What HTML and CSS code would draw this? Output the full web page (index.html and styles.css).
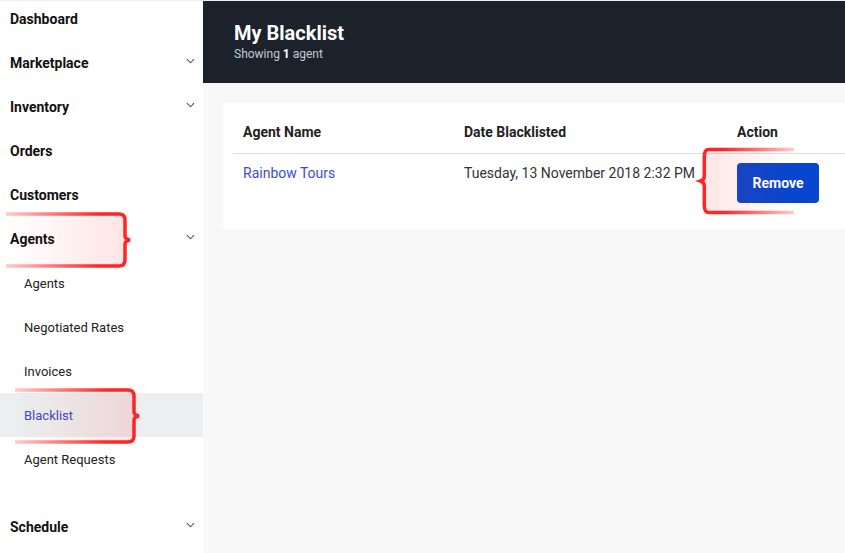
FILE: index.html
```html
<!DOCTYPE html>
<html>
<head>
<meta charset="utf-8">
<link rel="stylesheet" href="styles.css">
</head>
<body>
<div class="app">
  <aside class="sidebar">
    <ul class="nav">
      <li class="nav-item"><span>Dashboard</span></li>
      <li class="nav-item"><span>Marketplace</span><svg class="chev" viewBox="0 0 10 6"><path d="M1 1l4 4 4-4"/></svg></li>
      <li class="nav-item"><span>Inventory</span><svg class="chev" viewBox="0 0 10 6"><path d="M1 1l4 4 4-4"/></svg></li>
      <li class="nav-item"><span>Orders</span></li>
      <li class="nav-item"><span>Customers</span></li>
      <li class="nav-item"><span>Agents</span><svg class="chev" viewBox="0 0 10 6"><path d="M1 1l4 4 4-4"/></svg></li>
      <li class="sub">
        <ul>
          <li class="sub-item">Agents</li>
          <li class="sub-item">Negotiated Rates</li>
          <li class="sub-item">Invoices</li>
          <li class="sub-item active">Blacklist</li>
          <li class="sub-item">Agent Requests</li>
        </ul>
      </li>
      <li class="nav-item"><span>Schedule</span><svg class="chev" viewBox="0 0 10 6"><path d="M1 1l4 4 4-4"/></svg></li>
    </ul>
  </aside>
  <main class="main">
    <header class="page-head">
      <h1>My Blacklist</h1>
      <p>Showing <b>1</b> agent</p>
    </header>
    <section class="card">
      <div class="table">
        <div class="th">Agent Name</div>
        <div class="th">Date Blacklisted</div>
        <div class="th">Action</div>
        <div class="td"><a class="link">Rainbow Tours</a></div>
        <div class="td">Tuesday, 13 November 2018 2:32 PM</div>
        <div class="td td-action"><button class="btn">Remove</button></div>
      </div>
    </section>
  </main>
</div>

<svg class="mark mark-agents" viewBox="0 0 126 56" width="126" height="56">
  <defs>
    <linearGradient id="fr" x1="0" x2="1" y1="0" y2="0">
      <stop offset="0" stop-color="#ff2020" stop-opacity="0"/>
      <stop offset="1" stop-color="#ff2020" stop-opacity="0.12"/>
    </linearGradient>
    <linearGradient id="sr" x1="0" x2="1" y1="0" y2="0">
      <stop offset="0" stop-color="#ff3030" stop-opacity="0.25"/>
      <stop offset="0.75" stop-color="#ff2525" stop-opacity="1"/>
    </linearGradient>
  </defs>
  <path d="M0 2H113Q119 2 119 8V24Q119 27 124 28Q119 29 119 32V48Q119 54 113 54H0" fill="url(#fr)" stroke="url(#sr)" stroke-width="3.5"/>
</svg>
<svg class="mark mark-black" viewBox="0 0 126 56" width="126" height="56">
  <path d="M0 2H113Q119 2 119 8V24Q119 27 124 28Q119 29 119 32V48Q119 54 113 54H0" fill="url(#fr)" stroke="url(#sr)" stroke-width="3.5"/>
</svg>
<svg class="mark mark-remove" viewBox="0 0 126 56" width="95" height="68" preserveAspectRatio="none">
  <path d="M0 2H113Q119 2 119 8V24Q119 27 124 28Q119 29 119 32V48Q119 54 113 54H0" fill="url(#fr)" stroke="url(#sr)" stroke-width="3.5" vector-effect="non-scaling-stroke"/>
</svg>
</body>
</html>
```
FILE: styles.css
```css
* { box-sizing: border-box; }
html, body { margin: 0; padding: 0; }
body {
  font-family: Roboto, "Liberation Sans", sans-serif;
  background: #f8f8f8;
  width: 845px;
  height: 553px;
  overflow: hidden;
  border-top: 1px solid #eceeef;
  position: relative;
}
.app {
  display: flex;
  height: 552px;
}
.sidebar {
  width: 203px;
  flex: none;
  background: #fff;
  overflow: hidden;
}
.nav, .nav ul { list-style: none; margin: 0; padding: 0; }
.nav { margin-top: -4px; }
.nav-item {
  height: 44px;
  display: flex;
  align-items: center;
  justify-content: space-between;
  padding: 0 8px 0 10px;
  font-size: 14px;
  font-weight: 700;
  color: #111;
}
.chev {
  width: 9px;
  height: 6px;
  margin-top: -4px;
  fill: none;
  stroke: #555;
  stroke-width: 1.2;
}
.sub { padding-bottom: 24px; }
.sub-item {
  height: 44px;
  display: flex;
  align-items: center;
  padding-left: 24px;
  font-size: 13px;
  color: #222;
}
.sub-item.active {
  background: #eceeef;
  color: #3949c9;
}
.main {
  flex: 1;
  min-width: 0;
  overflow: hidden;
}
.page-head {
  background: #1b222c;
  height: 82px;
  padding: 20px 31px 0;
  color: #fff;
}
.page-head h1 {
  margin: 0;
  font-size: 20px;
  line-height: 24px;
  font-weight: 700;
}
.page-head p {
  margin: 1px 0 0;
  font-size: 12px;
  line-height: 16px;
  color: #c2cad3;
}
.page-head p b { color: #fff; }
.card {
  margin: 20px 0 0 20px;
  width: 660px;
  background: #fff;
  padding: 0 10px 26px;
}
.table {
  display: grid;
  grid-template-columns: 221px 273px 1fr;
}
.th {
  padding: 20px 10px 12px;
  font-size: 14px;
  line-height: 18px;
  font-weight: 700;
  color: #222;
  border-bottom: 1px solid #dcdcdc;
}
.td {
  padding: 10px 10px 0;
  font-size: 14px;
  line-height: 18px;
  color: #333;
}
.td-action { padding-top: 9px; }
.link { color: #3a4ecf; text-decoration: none; }
.btn {
  display: block;
  width: 82px;
  height: 40px;
  border: 0;
  border-radius: 4px;
  background: #0846cf;
  color: #fff;
  font-family: Roboto, "Liberation Sans", sans-serif;
  font-size: 14px;
  font-weight: 700;
}
.mark { position: absolute; overflow: visible; }
.mark-agents { left: 6px; top: 211px; }
.mark-black { left: 15px; top: 387px; }
.mark-remove { left: 699px; top: 146px; transform: scaleX(-1); }
```
